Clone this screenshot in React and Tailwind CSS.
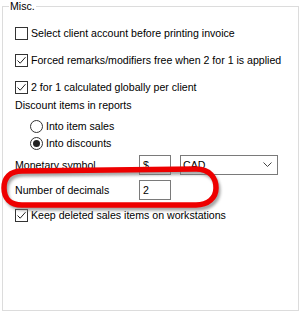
import React from "react";

const font = { fontFamily: '"Liberation Sans", Arial, sans-serif' };

function Check({ checked }) {
  return (
    <span className="flex h-[13px] w-[13px] shrink-0 items-center justify-center border border-[#333333] bg-white">
      {checked && (
        <svg width="11" height="11" viewBox="0 0 11 11">
          <path d="M1.5 5.5 L4.2 8.2 L9.5 2.2" fill="none" stroke="#222" strokeWidth="1" />
        </svg>
      )}
    </span>
  );
}

function Radio({ checked }) {
  return (
    <span className="flex h-[13px] w-[13px] shrink-0 items-center justify-center rounded-full border border-[#333333] bg-white">
      {checked && <span className="h-[7px] w-[7px] rounded-full bg-[#222]" />}
    </span>
  );
}

const ring =
  "M22 171 L196 169 C210 169 216 178 216 188 C216 198 208 205 196 205 L22 205 C10 205 4 198 4 188 C4 178 10 171 22 171 Z";

export default function App() {
  return (
    <div className="relative h-[318px] w-[300px] overflow-hidden bg-white text-[10.6px] leading-[14px] text-black" style={font}>
      <div className="pl-[2px] pt-0">
        <fieldset className="h-[311px] w-[297px] border border-[#dcdcdc] px-0 pb-0">
          <legend className="ml-[6px] px-[1px] text-[10.6px] leading-[13px]">Misc.</legend>
          <div className="flex flex-col pl-[12px]">
            <div className="mt-[13px] flex h-[14px] items-center gap-[3px] whitespace-nowrap">
              <Check checked={false} />
              <span>Select client account before printing invoice</span>
            </div>
            <div className="mt-[13px] flex h-[14px] items-center gap-[3px] whitespace-nowrap">
              <Check checked />
              <span>Forced remarks/modifiers free when 2 for 1 is applied</span>
            </div>
            <div className="mt-[13px] flex h-[14px] items-center gap-[3px] whitespace-nowrap">
              <Check checked />
              <span>2 for 1 calculated globally per client</span>
            </div>
            <div className="mt-[4px] flex h-[14px] items-center">Discount items in reports</div>
            <div className="mt-[7px] flex h-[14px] items-center gap-[3px] pl-[15px]">
              <Radio checked={false} />
              <span>Into item sales</span>
            </div>
            <div className="mt-[3px] flex h-[14px] items-center gap-[3px] pl-[15px]">
              <Radio checked />
              <span>Into discounts</span>
            </div>
            <div className="mt-[5px] flex h-[20px] items-center">
              <span className="w-[124px]">Monetary symbol</span>
              <div className="flex h-[20px] w-[32px] items-center border border-[#7a7a7a] pl-[3px]">$</div>
              <div className="ml-[9px] flex h-[20px] w-[98px] items-center justify-between border border-[#7a7a7a] pl-[2px] pr-[5px]">
                <span>CAD</span>
                <svg width="9" height="6" viewBox="0 0 9 6">
                  <path d="M0.5 0.5 L4.5 4.5 L8.5 0.5" fill="none" stroke="#444" strokeWidth="1" />
                </svg>
              </div>
            </div>
            <div className="mt-[5px] flex h-[20px] items-center">
              <span className="w-[124px]">Number of decimals</span>
              <div className="flex h-[20px] w-[32px] items-center border border-[#7a7a7a] pl-[3px]">2</div>
            </div>
            <div className="mt-[8px] flex h-[14px] items-center gap-[3px] whitespace-nowrap">
              <Check checked />
              <span>Keep deleted sales items on workstations</span>
            </div>
          </div>
        </fieldset>
      </div>
      <svg className="pointer-events-none absolute left-0 top-0" width="300" height="318" viewBox="0 0 300 318">
        <defs>
          <filter id="sh" x="-20%" y="-50%" width="140%" height="200%">
            <feGaussianBlur stdDeviation="1.6" />
          </filter>
        </defs>
        <path d={ring} fill="none" stroke="#7a7a7a" strokeWidth="5" opacity="0.7" filter="url(#sh)" transform="translate(2 3)" />
        <path d={ring} fill="none" stroke="#ee0000" strokeWidth="5.5" />
      </svg>
    </div>
  );
}
